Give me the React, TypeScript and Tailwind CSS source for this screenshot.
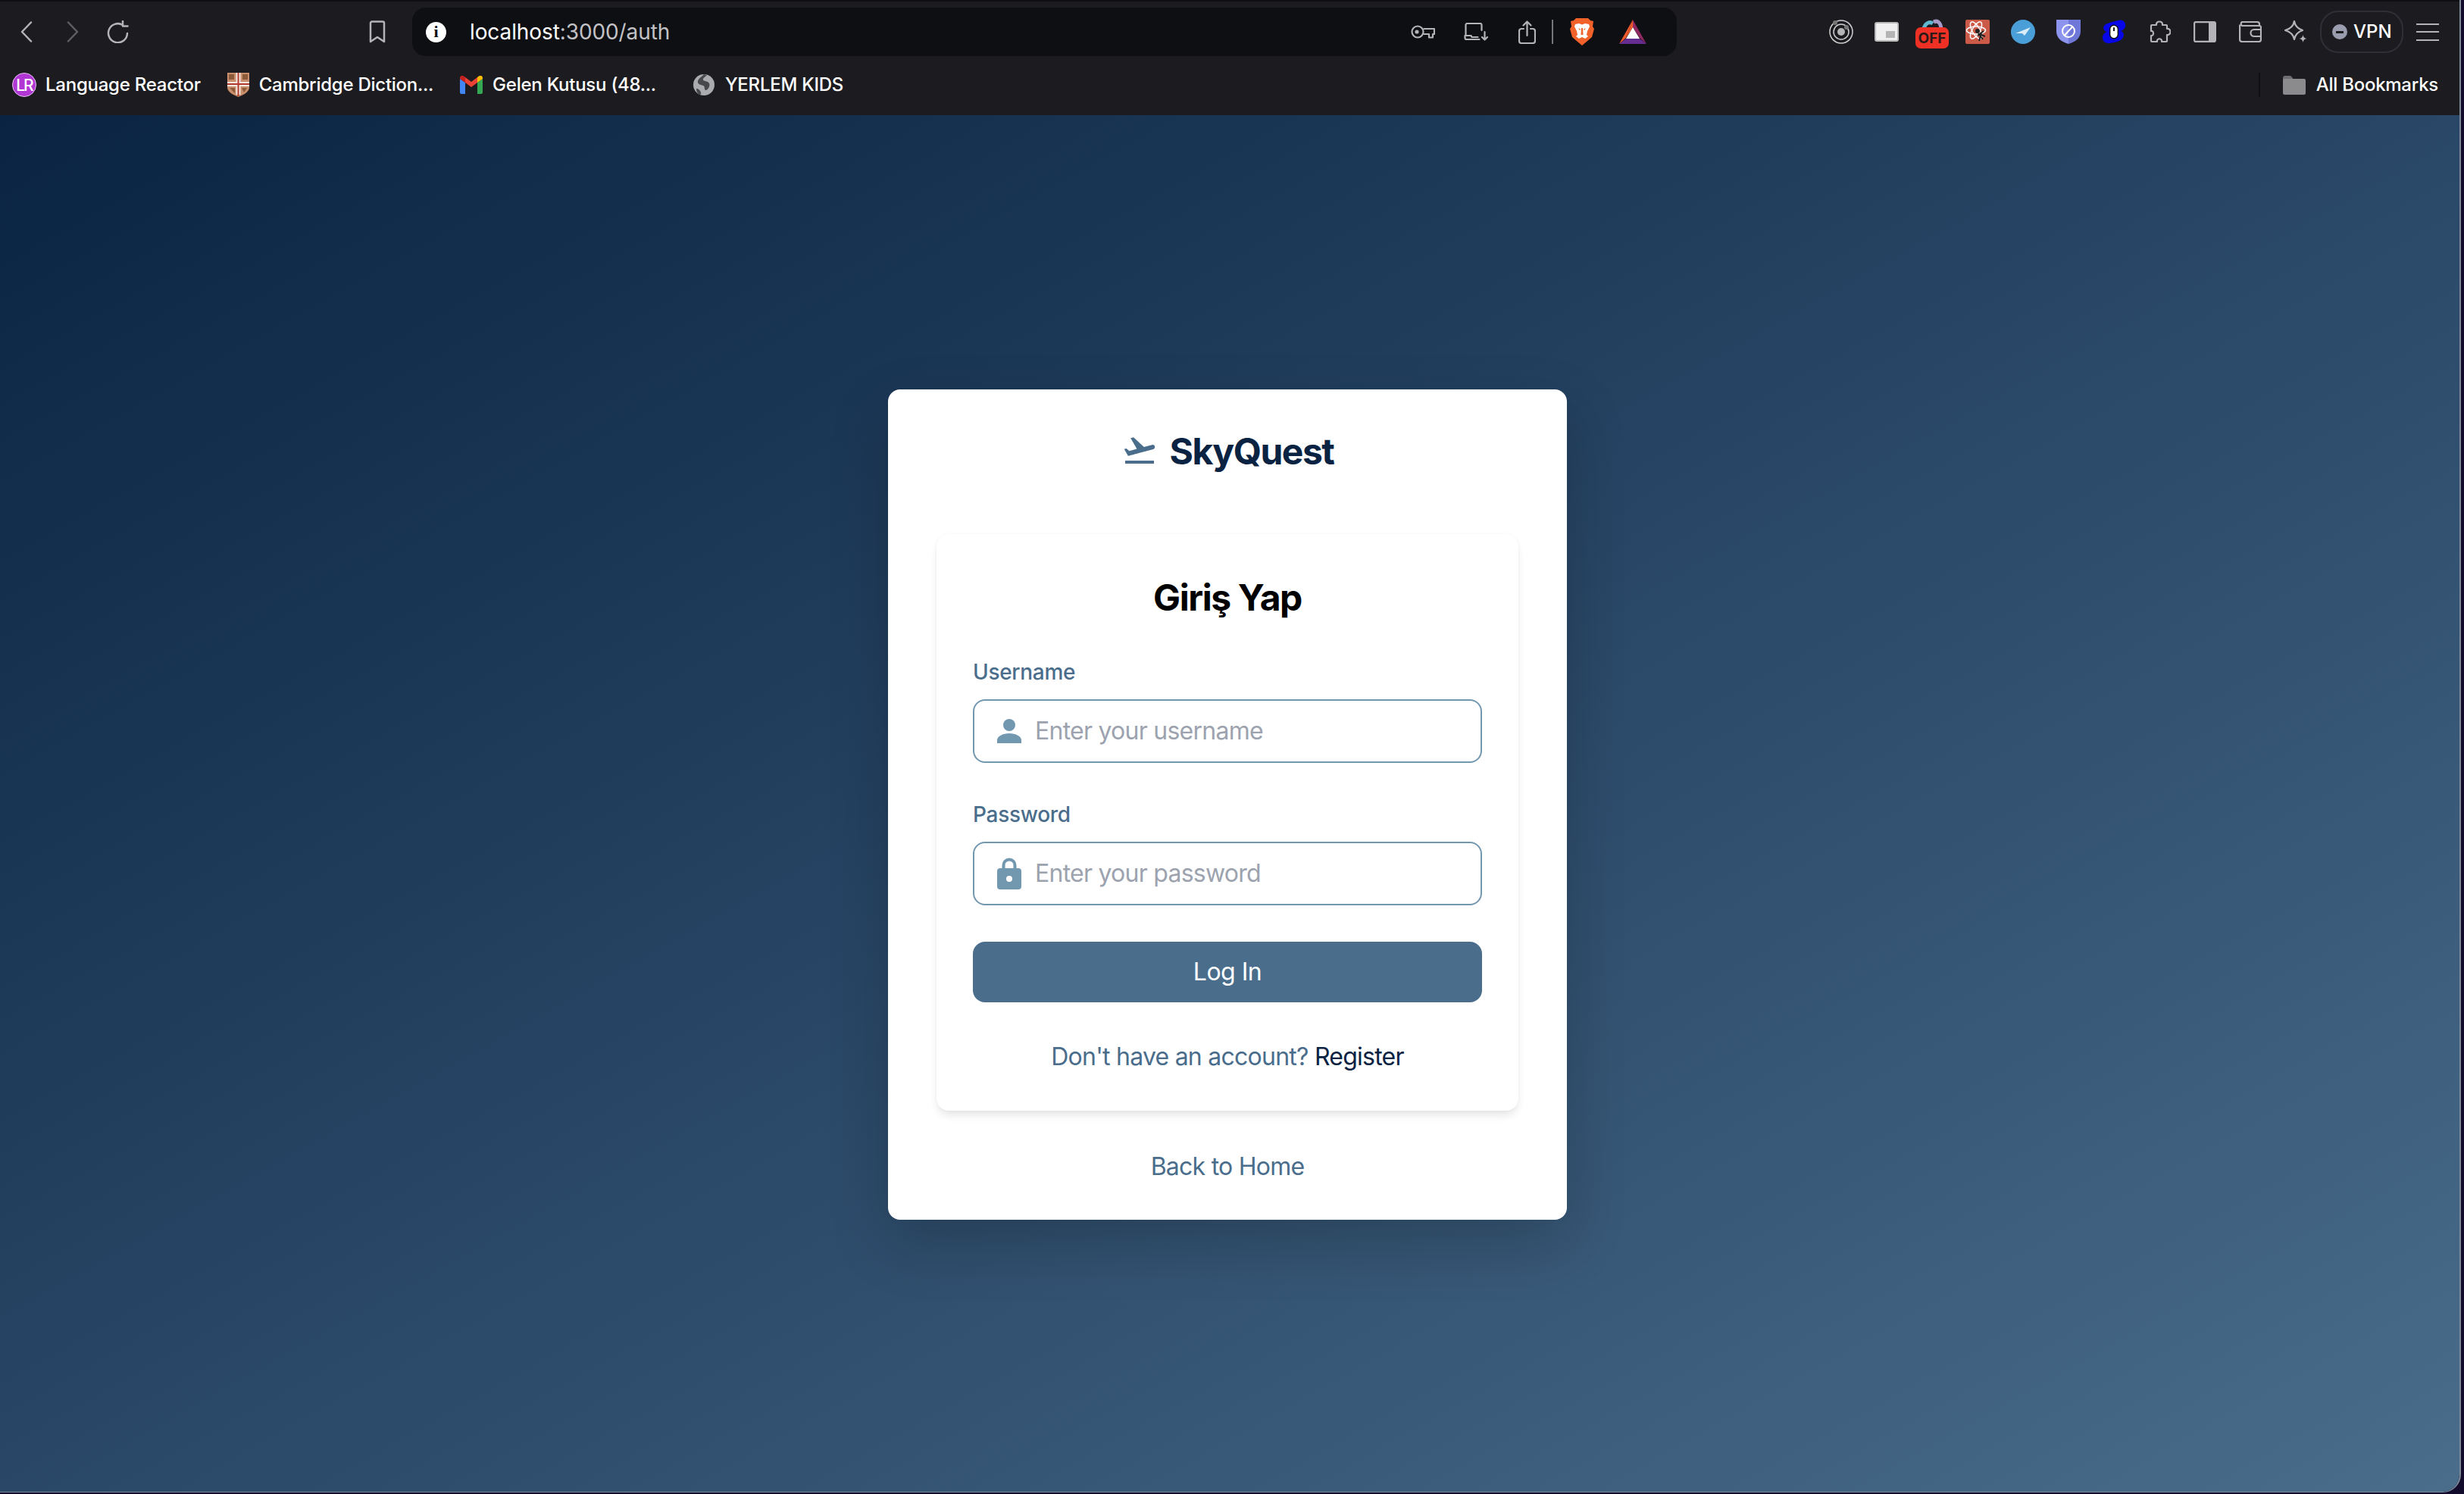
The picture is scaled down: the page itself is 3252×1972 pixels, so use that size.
import React from 'react'
import { MdFlightTakeoff } from 'react-icons/md'

const iconStroke = '#b4b4b8'

function Chevron({ dir, color }: { dir: 'left' | 'right'; color: string }) {
  return (
    <svg width="16" height="28" viewBox="0 0 16 28" fill="none" stroke={color} strokeWidth="2.5" strokeLinecap="round" strokeLinejoin="round">
      <path d={dir === 'left' ? 'M14 1.5 2 14l12 12.5' : 'M2 1.5 14 14 2 26.5'} />
    </svg>
  )
}

function Reload() {
  return (
    <svg width="30" height="30" viewBox="0 0 30 30" fill="none" stroke={iconStroke} strokeWidth="2.5" strokeLinecap="round" strokeLinejoin="round">
      <path d="M27 17a12.5 12.5 0 1 1-6-11" />
      <path d="M21 1v6.5h6.5" />
    </svg>
  )
}

function Bookmark() {
  return (
    <svg width="22" height="30" viewBox="0 0 22 30" fill="none" stroke={iconStroke} strokeWidth="2.5" strokeLinejoin="round">
      <path d="M2 3.5A2 2 0 0 1 4 1.5h14a2 2 0 0 1 2 2V28l-9-6-9 6z" />
    </svg>
  )
}

function KeyIcon() {
  return (
    <svg width="32" height="18" viewBox="0 0 32 18" fill="none" stroke={iconStroke} strokeWidth="2.2" strokeLinejoin="round">
      <circle cx="9" cy="9" r="7.5" />
      <circle cx="8" cy="9" r="2.6" fill={iconStroke} stroke="none" />
      <path d="M16.5 5H31v7h-2v4.500h-5V12h-7.500" />
    </svg>
  )
}

function LaptopDownload() {
  return (
    <svg width="32" height="24" viewBox="0 0 32 24" fill="none" stroke={iconStroke} strokeWidth="2.2" strokeLinecap="round" strokeLinejoin="round">
      <path d="M2.500 17V3a2 2 0 0 1 2-2h17a2 2 0 0 1 2 2v7" />
      <path d="M1.500 17h8l1 2h8M1.500 17v3a2 2 0 0 0 2 2h17" />
      <path d="M27.500 12v10M24 19l3.500 3.500L31 19" />
    </svg>
  )
}

function ShareIcon() {
  return (
    <svg width="23" height="31" viewBox="0 0 23 31" fill="none" stroke={iconStroke} strokeWidth="2.2" strokeLinecap="round" strokeLinejoin="round">
      <path d="M7 11H4a3 3 0 0 0-3 3v13a3 3 0 0 0 3 3h15a3 3 0 0 0 3-3V14a3 3 0 0 0-3-3h-3" />
      <path d="M11.500 20V1.500M6.500 6.500l5-5 5 5" />
    </svg>
  )
}

function BraveLion() {
  return (
    <svg width="32" height="36" viewBox="0 0 32 36">
      <path d="M8 0h16l3 3 4 1-1 7 2 3-3 11-7 6-6 5-6-5-7-6L0 14l2-3-1-7 4-1z" fill="#f1622a" />
      <path d="M7 8l5-1 4 1.500L20 7l5 1 1 3-3 6-1 5 2 2-4 3-4-2-4 2-4-3 2-2-1-5-3-6z" fill="#fff" />
      <path d="M11 13l3 1.500-1 1.500zM21 13l-3 1.500 1 1.500zM15 13h2l.5 9h-3zM13 27l3-1.500 3 1.500-3 3z" fill="#f1622a" />
    </svg>
  )
}

function BatTriangle() {
  return (
    <svg width="36" height="32" viewBox="0 0 36 32">
      <path d="M18 0 0 32l9-8z" fill="#f15a2b" />
      <path d="M18 0 9 24l9-14z" fill="#f15a2b" />
      <path d="M18 0v10l9 14 9 8z" fill="#8f2760" />
      <path d="M0 32h36l-9-7H9z" fill="#662d91" />
      <path d="M18 10 9 25h18z" fill="#fff" />
    </svg>
  )
}

function Rings() {
  return (
    <svg width="32" height="32" viewBox="0 0 32 32" fill="none" stroke="#d0d0d0">
      <circle cx="16" cy="16" r="15" strokeWidth="1.500" />
      <circle cx="16" cy="16" r="10" strokeWidth="1.500" />
      <circle cx="16" cy="16" r="5" fill="#b5b5b5" stroke="none" />
      <circle cx="8" cy="4" r="3" fill="#777" stroke="none" />
      <circle cx="23" cy="10" r="3" fill="#777" stroke="none" />
    </svg>
  )
}

function PipWindow() {
  return (
    <div className="flex h-[26px] w-[32px] items-end justify-end rounded-[3px] border-[2px] border-[#b9b9b9] bg-[#f0f0f0] p-[3px]">
      <div className="h-[9px] w-[12px] bg-[#b5b5b5]" />
    </div>
  )
}

function OffBadge() {
  return (
    <div className="relative h-[32px] w-[32px]">
      <svg className="absolute left-[2px] top-[-1px]" width="30" height="14" viewBox="0 0 30 14" fill="none" strokeWidth="5">
        <path d="M3 13C5 5 11 3 15 6" stroke="#62b6cf" />
        <path d="M16 4c4-2 9-1 10 9" stroke="#a89ac8" />
      </svg>
      <div className="absolute left-[-6px] top-[10px] flex h-[28px] w-[44px] items-center justify-center rounded-[7px] bg-[#ee3124] text-[19px] font-bold leading-none text-[#2b1a18]">
        OFF
      </div>
    </div>
  )
}

function AtomIcon() {
  return (
    <svg width="32" height="32" viewBox="0 0 32 32" fill="none">
      <rect width="32" height="32" rx="2" fill="#cb5a48" />
      <g stroke="#fff" strokeWidth="1.500">
        <ellipse cx="14" cy="14" rx="12.500" ry="5" />
        <ellipse cx="14" cy="14" rx="12.500" ry="5" transform="rotate(60 14 14)" />
        <ellipse cx="14" cy="14" rx="12.500" ry="5" transform="rotate(120 14 14)" />
      </g>
      <circle cx="16" cy="15" r="3" fill="#222" />
      <path d="M17 18l6 8M21 18l-3 10M24 15l-8 6M26 22l-8-3" stroke="#222" strokeWidth="2" />
    </svg>
  )
}

function PlaneCircle() {
  return (
    <svg width="32" height="32" viewBox="0 0 32 32">
      <circle cx="16" cy="16" r="16" fill="#4a9fd8" />
      <path d="M6 18 26 10l-8 11-3-3z" fill="#d9ecf8" />
    </svg>
  )
}

function BlockShield() {
  return (
    <svg width="32" height="32" viewBox="0 0 32 32" fill="none">
      <path d="M0 0h16v32C6 29 0 24 0 15z" fill="#8c94ee" />
      <path d="M32 0H16v32c10-3 16-8 16-17z" fill="#6f78d8" />
      <circle cx="16" cy="15" r="8" stroke="#fff" strokeWidth="2" />
      <path d="m10.500 21 11-12" stroke="#fff" strokeWidth="2" />
    </svg>
  )
}

function BlueMouse() {
  return (
    <svg width="33" height="32" viewBox="0 0 33 32">
      <path d="M20 1c7-3 13 1 12 7 0 4-4 6-6 7 4 1 5 6 2 10-3 4-9 5-14 6-7 2-13-1-13-7 0-4 3-7 6-8-4-1-6-5-4-8 3-4 10-5 17-7z" fill="#0606e8" />
      <rect x="11" y="7" width="11" height="18" rx="5.500" fill="#fff" stroke="#111" strokeWidth="1.500" />
      <path d="M16.500 10v5" stroke="#111" strokeWidth="2" />
    </svg>
  )
}

function PuzzleIcon() {
  return (
    <svg width="30" height="30" viewBox="0 0 30 30" fill="none" stroke={iconStroke} strokeWidth="2.200" strokeLinejoin="round">
      <path d="M11 6C10 0 20 0 19 6h5a1 1 0 0 1 1 1v4c6-1 6 9 0 8v8a1 1 0 0 1-1 1h-6c1-5-7-5-6 0H5a1 1 0 0 1-1-1v-7c4 1 4-7 0-6V7a1 1 0 0 1 1-1z" />
    </svg>
  )
}

function PanelIcon() {
  return (
    <svg width="30" height="28" viewBox="0 0 30 28" fill="none">
      <rect x="1.100" y="1.100" width="27.800" height="25.800" rx="2" stroke={iconStroke} strokeWidth="2.200" />
      <path d="M20 1h8a1 1 0 0 1 1 1v24a1 1 0 0 1-1 1h-8z" fill={iconStroke} />
    </svg>
  )
}

function WalletIcon() {
  return (
    <svg width="30" height="28" viewBox="0 0 30 28" fill="none" stroke={iconStroke} strokeWidth="2.200" strokeLinejoin="round">
      <path d="M1.100 4.500V24a3 3 0 0 0 3 3H26a3 3 0 0 0 3-3V8a2 2 0 0 0-2-2H4a3 3 0 0 1 0-5h20a3 3 0 0 1 3 3v2" />
      <path d="M29 11H20a4 4 0 0 0 0 9h9" />
    </svg>
  )
}

function SparkleIcon() {
  return (
    <svg width="30" height="30" viewBox="0 0 30 30" fill="none">
      <path d="M13 1c1 6 5 10 11 12-6 2-10 6-11 12-1-6-5-10-12-12C8 11 12 7 13 1z" stroke={iconStroke} strokeWidth="2.200" strokeLinejoin="round" />
      <path d="M24.500 19c.5 3 2 4.500 5 5-3 .5-4.500 2-5 5-.5-3-2-4.500-5-5 3-.5 4.500-2 5-5z" fill={iconStroke} />
    </svg>
  )
}

function MenuIcon() {
  return (
    <div className="flex h-[23px] w-[30px] flex-col justify-between">
      <div className="h-[2px] bg-[#b4b4b8]" />
      <div className="h-[2px] bg-[#b4b4b8]" />
      <div className="h-[2px] bg-[#b4b4b8]" />
    </div>
  )
}

function ReactorLogo() {
  return (
    <div className="flex h-[32px] w-[32px] shrink-0 items-center justify-center rounded-full border border-[#e3c5ee] bg-[#b136d3] text-[21px] font-medium leading-none tracking-[-2px] text-white">
      LR
    </div>
  )
}

function CambridgeLogo() {
  return (
    <svg className="shrink-0" width="29" height="32" viewBox="0 0 29 32">
      <path d="M0 0h29v19c0 6-7 10-14.500 13C7 29 0 25 0 19z" fill="#c98f6c" />
      <path d="M0 12h29v6H0zM11.500 0h6v29h-6z" fill="#f2e8df" />
      <path d="M0 14h29v2H0zM13.500 0h2v31h-2z" fill="#b33a2c" />
      <path d="M2 2h7v7H2zM20 2h7v7h-7zM19 20h7l-4 6zM3 20h7v7z" fill="#8a5a3a" />
    </svg>
  )
}

function GmailLogo() {
  return (
    <svg className="shrink-0" width="30" height="24" viewBox="0 0 30 24" fill="none">
      <path d="M2 24a2 2 0 0 1-2-2V4l7 5v15z" fill="#4285f4" />
      <path d="M28 24a2 2 0 0 0 2-2V4l-7 5v15z" fill="#34a853" />
      <path d="M23 2v7l7 -5V3c0-3-3-4-5-2.500z" fill="#fbbc04" />
      <path d="M7 9V2l8 6 8-6v7l-8 6z" fill="#ea4335" />
      <path d="M0 3c0-3 3-4 5-2.500L7 2v7L0 4z" fill="#c5221f" />
    </svg>
  )
}

function GlobeLogo() {
  return (
    <svg className="shrink-0" width="28" height="28" viewBox="0 0 28 28">
      <circle cx="14" cy="14" r="14" fill="#a9abae" />
      <path d="M14 0c-3 4-7 5-8 9s4 5 7 6 1 5 3 6 7-5 5-9-8-2-8-5 4-4 5-6z" fill="#46484c" />
      <path d="M4 19c3 0 5 2 6 5s-2 3-2 3c-3-2-4-5-4-8z" fill="#46484c" />
    </svg>
  )
}

function FolderIcon() {
  return (
    <svg className="shrink-0" width="30" height="25" viewBox="0 0 30 25">
      <path d="M0 3a3 3 0 0 1 3-3h7l3 3v3H0z" fill="#6e6e70" />
      <rect y="4" width="30" height="21" rx="2" fill="#8b8b8d" />
    </svg>
  )
}

function BookmarkItem({ icon, label, className }: { icon: React.ReactNode; label: string; className: string }) {
  return (
    <div className={`flex items-center whitespace-nowrap ${className}`}>
      {icon}
      <span>{label}</span>
    </div>
  )
}

function ExtSlot({ children }: { children: React.ReactNode }) {
  return <div className="flex w-[32px] justify-center">{children}</div>
}

function BrowserChrome() {
  return (
    <div className="h-[152px] shrink-0 border-t-[2px] border-[#0f0f12] bg-[#1c1c20] font-['Inter',sans-serif] text-white">
      {/* Toolbar */}
      <div className="flex h-[80px] items-center pb-[4px] pt-[4px]">
        <div className="ml-[27px]"><Chevron dir="left" color="#b4b4b8" /></div>
        <div className="ml-[45px]"><Chevron dir="right" color="#5f5f63" /></div>
        <div className="ml-[37px]"><Reload /></div>
        <div className="ml-[316px]"><Bookmark /></div>
        <div className="ml-[35px] flex h-[64px] w-[1669px] items-center rounded-[18px] bg-[#0e0f13]">
          <div className="ml-[18px] flex h-[27px] w-[27px] items-center justify-center rounded-full bg-white font-['Liberation_Serif',serif] text-[22px] font-bold leading-none text-[#0e0f13]">
            i
          </div>
          <div className="ml-[31px] text-[28px] leading-none tracking-[-0.1px]">
            localhost<span className="text-[#c2c2c6]">:3000/auth</span>
          </div>
          <div className="ml-[978px]"><KeyIcon /></div>
          <div className="ml-[38px]"><LaptopDownload /></div>
          <div className="ml-[40px]"><ShareIcon /></div>
          <div className="ml-[21px] h-[32px] w-[2px] bg-[#77777b]" />
          <div className="ml-[22px]"><BraveLion /></div>
          <div className="ml-[33px]"><BatTriangle /></div>
        </div>
        <div className="ml-[201px] flex items-center gap-[28px]">
          <ExtSlot><Rings /></ExtSlot>
          <ExtSlot><PipWindow /></ExtSlot>
          <ExtSlot><OffBadge /></ExtSlot>
          <ExtSlot><AtomIcon /></ExtSlot>
          <ExtSlot><PlaneCircle /></ExtSlot>
          <ExtSlot><BlockShield /></ExtSlot>
          <ExtSlot><BlueMouse /></ExtSlot>
          <ExtSlot><PuzzleIcon /></ExtSlot>
          <ExtSlot><PanelIcon /></ExtSlot>
          <ExtSlot><WalletIcon /></ExtSlot>
          <ExtSlot><SparkleIcon /></ExtSlot>
        </div>
        <div className="ml-[16px] flex h-[56px] w-[110px] shrink-0 items-center rounded-[24px] border-[2px] border-[#2f3036] pl-[14px] text-[24px] font-medium leading-none">
          <div className="flex h-[20px] w-[20px] items-center justify-center rounded-full bg-[#9a9dad]">
            <div className="h-[3px] w-[10px] bg-[#1c1c20]" />
          </div>
          <span className="ml-[8px]">VPN</span>
        </div>
        <div className="ml-[17px]"><MenuIcon /></div>
      </div>

      {/* Bookmarks bar */}
      <div className="flex h-[64px] items-center pb-[4px] pr-[28px] text-[24px] font-medium leading-none tracking-[-0.25px]">
        <BookmarkItem className="ml-[16px] gap-[12px]" icon={<ReactorLogo />} label="Language Reactor" />
        <BookmarkItem className="ml-[35px] gap-[13px]" icon={<CambridgeLogo />} label="Cambridge Diction..." />
        <BookmarkItem className="ml-[35px] gap-[13px]" icon={<GmailLogo />} label="Gelen Kutusu (48..." />
        <BookmarkItem className="ml-[49px] gap-[14px]" icon={<GlobeLogo />} label="YERLEM KIDS" />
        <div className="ml-auto h-[32px] w-[2px] shrink-0 bg-[#0e0f13]" />
        <BookmarkItem className="ml-[30px] gap-[14px]" icon={<FolderIcon />} label="All Bookmarks" />
      </div>
    </div>
  )
}

function UserGlyph() {
  return (
    <svg width="32" height="32" viewBox="0 0 32 32" fill="#7298b0">
      <circle cx="16" cy="8" r="8" />
      <path d="M0 32v-4c0-5 7-9 16-9s16 4 16 9v4z" />
    </svg>
  )
}

function LockGlyph() {
  return (
    <svg width="32" height="42" viewBox="0 0 32 42" fill="#7298b0">
      <path d="M6.500 15V10a9.500 9.500 0 0 1 19 0v5h-4V10a5.500 5.500 0 0 0-11 0v5z" />
      <path fillRule="evenodd" d="M4 14h24a4 4 0 0 1 4 4v20a4 4 0 0 1-4 4H4a4 4 0 0 1-4-4V18a4 4 0 0 1 4-4zm12 10a4 4 0 1 0 0 8 4 4 0 0 0 0-8z" />
    </svg>
  )
}

function Field({ label, placeholder, type, icon }: { label: string; placeholder: string; type: string; icon: React.ReactNode }) {
  return (
    <div>
      <label className="mb-[16px] block text-[28px] font-medium leading-[40px] tracking-[-0.3px] text-[#4a6d8c]">{label}</label>
      <div className="relative">
        <div className="absolute left-[32px] top-1/2 -translate-y-1/2">{icon}</div>
        <input
          type={type}
          placeholder={placeholder}
          className="h-[84px] w-full rounded-[16px] border-[2px] border-[#7298b0] bg-white pl-[80px] pr-[32px] text-[32px] tracking-[-0.75px] outline-none placeholder:text-[#9ca3af]"
        />
      </div>
    </div>
  )
}

export default function App() {
  return (
    <div className="h-[1972px] w-[3252px] overflow-hidden bg-[#130b2b] font-['Inter',sans-serif]">
      <div className="flex h-[1970px] w-[3248px] flex-col overflow-hidden rounded-br-[24px] border-b-[1px] border-r-[2px] border-[#7f8b98]">
        <BrowserChrome />
        <main className="flex flex-1 items-center justify-center bg-gradient-to-br from-[#0a2342] to-[#4a6d8c] pr-[6px] pt-[2px]">
          <div className="w-[896px] rounded-[16px] bg-white px-[64px] pb-[46px] pt-[48px] shadow-[0_30px_80px_rgba(0,0,0,0.2)]">
            <div className="mb-[77px] mt-[2px] flex h-[64px] items-center justify-center gap-[16px]">
              <MdFlightTakeoff className="mb-[4px] h-[48px] w-[48px] text-[#4a6d8c]" />
              <span className="text-[48px] font-bold leading-[64px] tracking-[-1.5px] text-[#0a2342]">SkyQuest</span>
            </div>

            <div className="rounded-[16px] bg-white px-[48px] pb-[47px] pt-[48px] shadow-[0_8px_12px_-2px_rgba(0,0,0,0.1),0_0_4px_rgba(0,0,0,0.04)]">
              <h1 className="mb-[42px] text-center text-[48px] font-bold leading-[72px] tracking-[-1.4px] text-black">Giriş Yap</h1>
              <div className="mb-[48px]">
                <Field label="Username" placeholder="Enter your username" type="text" icon={<UserGlyph />} />
              </div>
              <Field label="Password" placeholder="Enter your password" type="password" icon={<LockGlyph />} />
              <button className="mt-[48px] h-[80px] w-full rounded-[16px] bg-[#4a6d8c] text-[32px] font-normal tracking-[-0.5px] text-white">Log In</button>
              <p className="mt-[48px] text-center text-[32px] leading-[48px] tracking-[-0.75px] text-[#4a6d8c]">
                Don't have an account? <span className="text-[#0a2342]">Register</span>
              </p>
            </div>

            <p className="mt-[50px] text-center text-[32px] leading-[48px] tracking-[-0.75px] text-[#4a6d8c]">Back to Home</p>
          </div>
        </main>
      </div>
    </div>
  )
}
